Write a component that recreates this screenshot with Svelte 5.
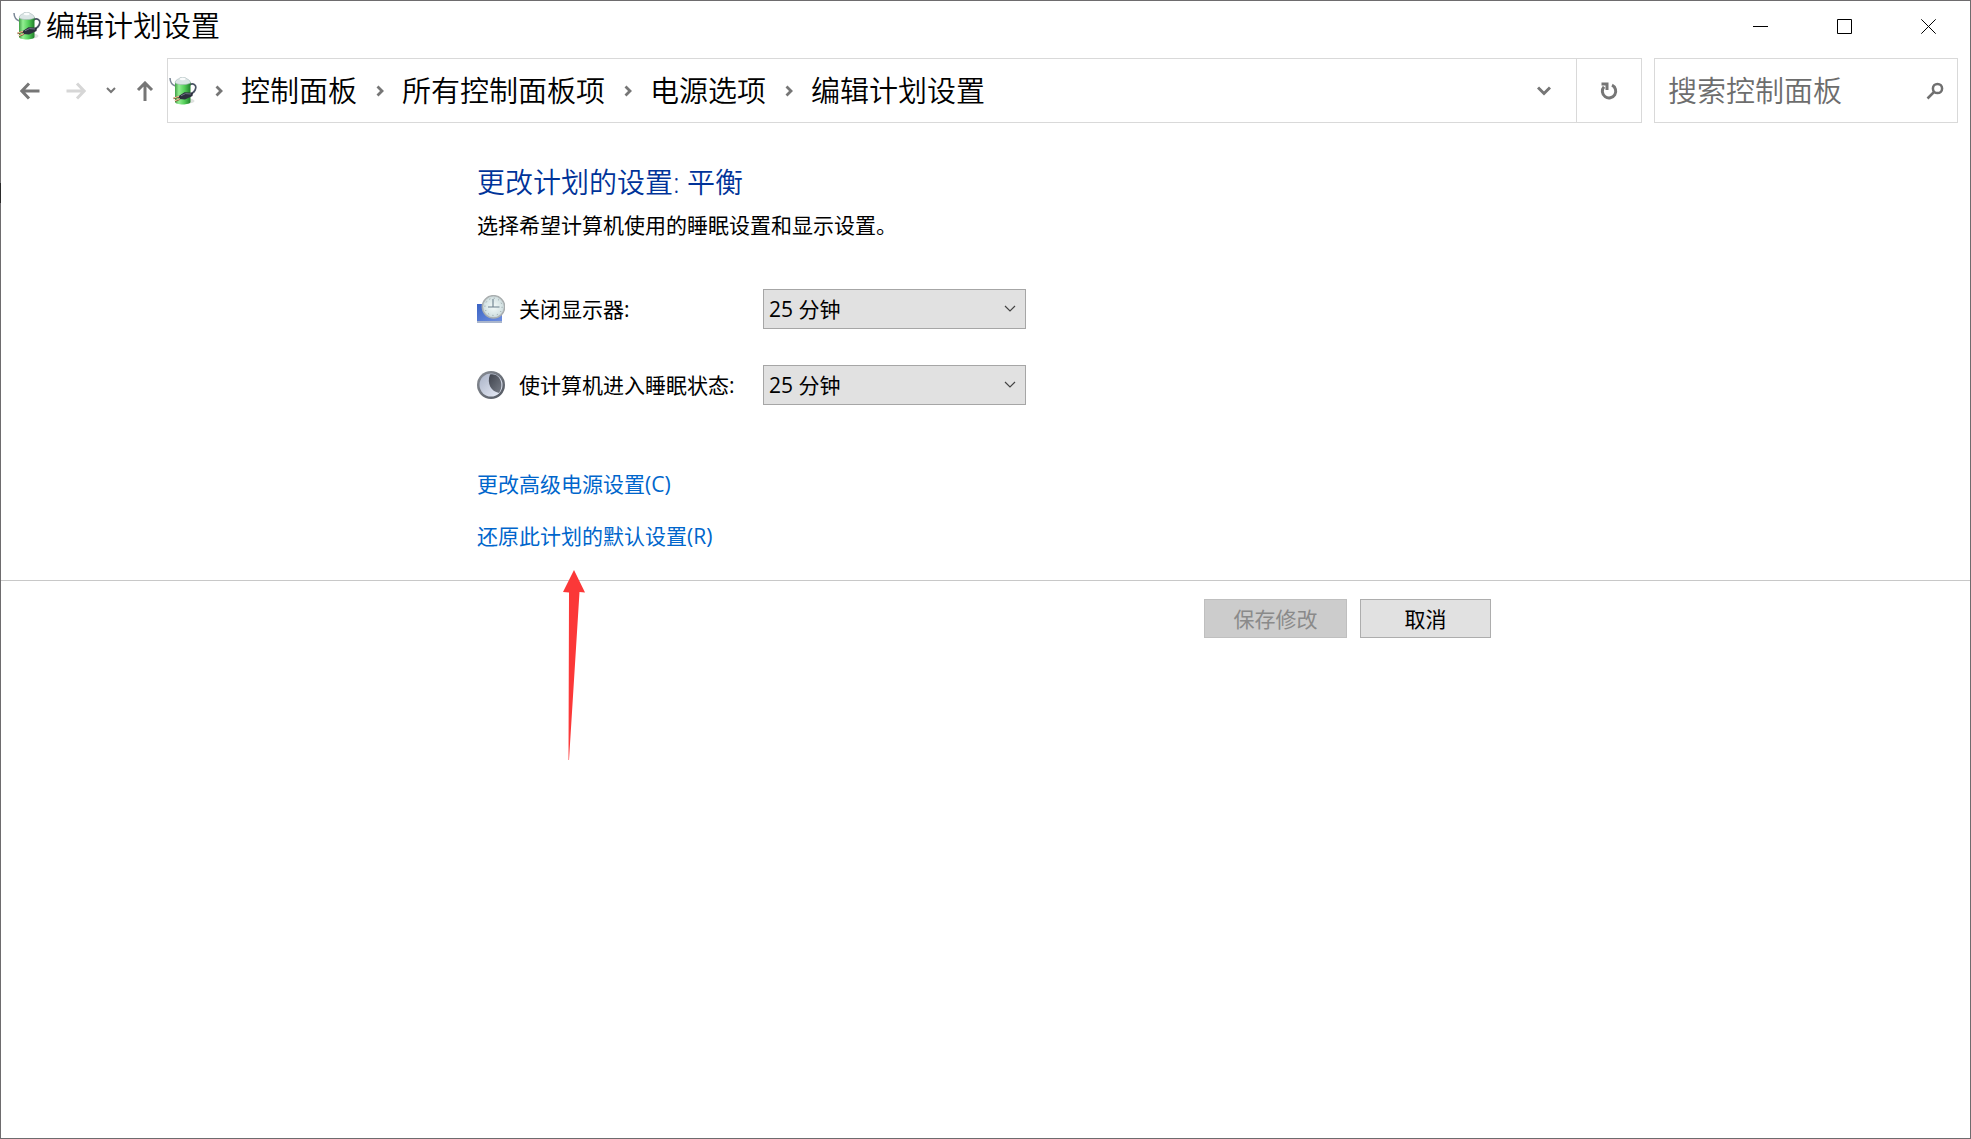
<script>
  const crumbs = ['控制面板', '所有控制面板项', '电源选项', '编辑计划设置'];
  const times = ['25 分钟', '30 分钟', '45 分钟', '1 小时', '从不'];
  const rows = [
    { id: 'display', label: '关闭显示器:' },
    { id: 'sleep', label: '使计算机进入睡眠状态:' }
  ];
  let values = $state({ display: '25 分钟', sleep: '25 分钟' });
</script>

{#snippet battery()}
  <svg class="battery" viewBox="0 0 28 28" aria-hidden="true">
    <defs>
      <linearGradient id="cell" x1="0" x2="1" y1="0" y2="0">
        <stop offset="0" stop-color="#3f9f45" />
        <stop offset="0.25" stop-color="#93ee92" />
        <stop offset="0.6" stop-color="#55d05a" />
        <stop offset="1" stop-color="#1f7f2a" />
      </linearGradient>
    </defs>
    <ellipse cx="19" cy="24" rx="6.500" ry="2.500" fill="#dfe1df" />
    <path d="M1 1C1.200 5.500 3 8 6.500 9" fill="none" stroke="#7b8796" stroke-width="1.500" />
    <path d="M20.500 8C24 5.500 27.600 8 26.600 11.500C26 14.500 24 16 21.500 17" fill="none" stroke="#4a5364" stroke-width="1.700" />
    <path d="M6 5V25C6 28.300 21.500 28.300 21.500 25V5Z" fill="url(#cell)" />
    <path d="M6 5.500C6.500 2.500 10 2 10.500 1.200C11.500 -0.200 16 -0.200 17 1.200C17.500 2 21 2.500 21.500 5.500C20 8.300 7.500 8.300 6 5.500Z" fill="#dbe5e5" stroke="#a3b3b5" stroke-width="0.600" />
    <ellipse cx="13.700" cy="2" rx="3" ry="1.200" fill="#fafcfc" />
    <path d="M9 19.500L15.500 15.200L24 15.800L23.500 19L16 22.500L10 22Z" fill="#2c2f3d" />
    <path d="M12 18.800L16.500 16.600L22 17" fill="none" stroke="#6f7484" stroke-width="1" />
    <path d="M10 19.500L4.500 21.500M11 22L6 24" stroke="#7a4a2c" stroke-width="1.800" />
    <path d="M10 19.200L4.500 21.200M11 21.700L6 23.700" stroke="#f2c9a0" stroke-width="1" />
  </svg>
{/snippet}

{#snippet chevron()}
  <svg class="chevron" viewBox="0 0 8 12" aria-hidden="true">
    <path d="M1.500 1.500L6 6L1.500 10.500" fill="none" stroke="#767676" stroke-width="2.800" />
  </svg>
{/snippet}

<div class="window">
  <header class="titlebar">
    {@render battery()}
    <h1>编辑计划设置</h1>
    <div class="controls">
      <button aria-label="最小化">
        <svg class="glyph" viewBox="0 0 15 15"><path d="M0 7.500H15" /></svg>
      </button>
      <button aria-label="最大化">
        <svg class="glyph" viewBox="0 0 15 15"><path d="M0.500 0.500H14.500V14.500H0.500Z" /></svg>
      </button>
      <button aria-label="关闭">
        <svg class="glyph" viewBox="0 0 15 15"><path d="M0.300 0.300L14.700 14.700M14.700 0.300L0.300 14.700" /></svg>
      </button>
    </div>
  </header>

  <nav class="navbar" aria-label="导航">
    <div class="history">
      <button class="wide" aria-label="后退">
        <svg class="arrow" viewBox="0 0 20 20"><path d="M19.500 10H2M9 2.500L1.800 10L9 17.500" /></svg>
      </button>
      <button class="wide faint" aria-label="前进" disabled>
        <svg class="arrow" viewBox="0 0 20 20"><path d="M0.500 10H18M11 2.500L18.200 10L11 17.500" /></svg>
      </button>
      <button class="narrow" aria-label="最近位置">
        <svg class="small" viewBox="0 0 10 7"><path d="M1 1L5 5L9 1" /></svg>
      </button>
      <button class="up" aria-label="上移">
        <svg class="arrow" viewBox="0 0 20 20"><path d="M10 20V2M3 9L10 2L17 9" /></svg>
      </button>
    </div>

    <div class="address">
      {@render battery()}
      <ol>
        {#each crumbs as crumb}
          <li>
            <span class="sep">{@render chevron()}</span>
            <a href="#top">{crumb}</a>
          </li>
        {/each}
      </ol>
      <button class="drop" aria-label="以前的位置">
        <svg class="down" viewBox="0 0 14 10"><path d="M1 1.500L7 7.500L13 1.500" /></svg>
      </button>
      <button class="refresh" aria-label="刷新">
        <svg class="arrow" viewBox="0 0 20 20">
          <path d="M13 4.200A6.700 6.700 0 1 1 5 5.800" />
          <path d="M2.500 3H8V9" />
        </svg>
      </button>
    </div>

    <div class="search">
      <input type="search" placeholder="搜索控制面板" aria-label="搜索控制面板" />
      <svg class="glass" viewBox="0 0 18 18" aria-hidden="true">
        <circle cx="11.500" cy="6.500" r="4.600" />
        <path d="M8 10L1.500 16.500" />
      </svg>
    </div>
  </nav>

  <main>
    <h2>更改计划的设置: 平衡</h2>
    <p>选择希望计算机使用的睡眠设置和显示设置。</p>

    <div class="settings">
      {#each rows as row}
        <div class="row">
          {#if row.id === 'display'}
            <svg class="icon" viewBox="0 0 28 28" aria-hidden="true">
              <defs>
                <linearGradient id="screen" x1="0" x2="1" y1="0" y2="1">
                  <stop offset="0" stop-color="#3a63c4" />
                  <stop offset="1" stop-color="#6f8fe0" />
                </linearGradient>
                <radialGradient id="dial">
                  <stop offset="0" stop-color="#f4faf9" />
                  <stop offset="0.800" stop-color="#d5e3e4" />
                  <stop offset="1" stop-color="#c3cdcf" />
                </radialGradient>
              </defs>
              <path d="M0 9H25V26H0Z" fill="url(#screen)" />
              <path d="M0 26H25V28H0Z" fill="#aab6cc" />
              <circle cx="16.500" cy="11.800" r="11.200" fill="url(#dial)" stroke="#a9aeaf" stroke-width="1.400" />
              <circle cx="16.500" cy="11.800" r="8.600" fill="none" stroke="#8e9ca0" stroke-width="1" stroke-dasharray="1 3.500" />
              <path d="M16 4V12.500M11 12H22.500" fill="none" stroke="#6b7f8c" stroke-width="1.100" />
            </svg>
          {:else}
            <svg class="icon" viewBox="0 0 28 28" aria-hidden="true">
              <defs>
                <linearGradient id="rim" x1="0" x2="1" y1="0" y2="1">
                  <stop offset="0" stop-color="#8b9097" />
                  <stop offset="1" stop-color="#50555f" />
                </linearGradient>
                <linearGradient id="moon" x1="0" x2="1" y1="0" y2="1">
                  <stop offset="0" stop-color="#a9b2c6" />
                  <stop offset="1" stop-color="#e9edf8" />
                </linearGradient>
                <linearGradient id="shade" x1="0" x2="1" y1="0" y2="1">
                  <stop offset="0" stop-color="#3f434d" />
                  <stop offset="1" stop-color="#777c86" />
                </linearGradient>
              </defs>
              <circle cx="14" cy="14" r="14" fill="url(#rim)" />
              <circle cx="14" cy="14" r="11.500" fill="url(#moon)" />
              <path d="M13 3.500C23 1.500 27.500 14 22 22C14 20.500 9.500 12 13 3.500Z" fill="url(#shade)" />
            </svg>
          {/if}
          <label for={row.id}>{row.label}</label>
          <div class="select">
            <select id={row.id} bind:value={values[row.id]}>
              {#each times as time}
                <option>{time}</option>
              {/each}
            </select>
            <svg class="caret" viewBox="0 0 12 8" aria-hidden="true"><path d="M1 1L6 6L11 1" /></svg>
          </div>
        </div>
      {/each}
    </div>

    <div class="links">
      <a href="#advanced">更改高级电源设置(C)</a>
      <a class="restore" href="#restore">
        还原此计划的默认设置(R)
        <svg class="pointer" viewBox="0 0 22 190" aria-hidden="true">
          <path d="M11 0L22 22.500L16.500 22L6 190H5.500L6 22.500L0 22Z" fill="#fb3838" />
        </svg>
      </a>
    </div>
  </main>

  <footer>
    <div class="actions">
      <button class="save" disabled>保存修改</button>
      <button class="cancel">取消</button>
    </div>
  </footer>
</div>

<style>
  :global(body) {
    background: #fff;
  }

  .window {
    position: relative;
    box-sizing: border-box;
    min-height: 100vh;
    border: 1px solid #6e6c6e;
    background: #fff;
    color: #000;
    font-family: 'Open Sans', 'Noto Sans CJK SC', sans-serif;
    font-size: 21px;
    line-height: 30px;
  }

  .window::before {
    content: '';
    position: absolute;
    left: -1px;
    top: 182px;
    width: 1px;
    height: 20px;
    background: #2a2a2a;
  }

  button,
  input,
  select {
    margin: 0;
    padding: 0;
    border: 0;
    border-radius: 0;
    background: none;
    color: inherit;
    font: inherit;
  }

  svg {
    display: block;
    flex: none;
  }

  .battery {
    width: 28px;
    height: 28px;
  }

  .titlebar {
    display: flex;
    align-items: center;
    height: 50px;
    padding-left: 12px;
  }

  h1 {
    margin: 0 0 0 5px;
    font-size: 29px;
    font-weight: 350;
    line-height: 40px;
  }

  .controls {
    display: flex;
    align-self: stretch;
    margin-left: auto;
  }

  .controls button {
    display: grid;
    place-items: center;
    width: 84px;
  }

  .glyph {
    width: 15px;
    height: 15px;
    fill: none;
    stroke: #000;
    stroke-width: 1;
  }

  .navbar {
    display: flex;
    gap: 12px;
    margin-top: 7px;
    padding-right: 12px;
  }

  .history {
    display: flex;
    align-items: center;
    padding-left: 6px;
  }

  .history button {
    display: grid;
    place-items: center;
    height: 48px;
  }

  .history .wide {
    width: 46px;
  }

  .history .narrow {
    width: 24px;
  }

  .history .up {
    width: 32px;
    margin-left: 6px;
    margin-right: -6px;
  }

  .arrow {
    width: 20px;
    height: 20px;
    fill: none;
    stroke: #767676;
    stroke-width: 3;
  }

  .faint .arrow {
    stroke: #d6d6d6;
  }

  .small,
  .down {
    fill: none;
    stroke: #767676;
    stroke-width: 2;
  }

  .small {
    width: 10px;
    height: 7px;
  }

  .down {
    width: 14px;
    height: 10px;
    stroke-width: 3;
  }

  .address,
  .search {
    display: flex;
    align-items: center;
    box-sizing: border-box;
    height: 65px;
    border: 1px solid #d9d9d9;
  }

  .address {
    flex: 1;
    min-width: 0;
    padding-left: 1px;
  }

  ol {
    display: flex;
    flex: 1;
    margin: 0;
    padding: 0;
    list-style: none;
    font-size: 29px;
    font-weight: 350;
    line-height: 40px;
  }

  li {
    display: flex;
    align-items: center;
  }

  li a {
    color: inherit;
    text-decoration: none;
    white-space: nowrap;
  }

  .sep {
    display: grid;
    place-items: center;
    width: 45px;
  }

  li:first-child .sep {
    width: 44px;
  }

  .chevron {
    width: 8px;
    height: 12px;
  }

  .drop,
  .refresh {
    display: grid;
    place-items: center;
    align-self: stretch;
    width: 64px;
  }

  .refresh {
    width: 65px;
    border-left: 1px solid #d9d9d9;
  }

  .search {
    width: 304px;
    padding: 0 13px;
  }

  .search input {
    flex: 1;
    min-width: 0;
    height: 44px;
    outline: none;
    appearance: none;
    font-size: 29px;
    font-weight: 350;
  }

  .search input::placeholder {
    color: #6d6d6d;
    opacity: 1;
  }

  .glass {
    width: 18px;
    height: 18px;
    fill: none;
    stroke: #707070;
    stroke-width: 2.5;
  }

  main {
    padding: 39px 0 29px 476px;
  }

  h2 {
    margin: 0;
    color: #003399;
    font-size: 28px;
    font-weight: 350;
    line-height: 40px;
  }

  p {
    margin: 8px 0 0;
  }

  .settings {
    display: flex;
    flex-direction: column;
    gap: 36px;
    margin-top: 49px;
  }

  .row {
    display: flex;
    align-items: center;
  }

  .icon {
    width: 28px;
    height: 28px;
  }

  .row label {
    width: 244px;
    margin-left: 14px;
  }

  .select {
    display: grid;
    align-items: center;
    width: 263px;
  }

  .select select {
    grid-area: 1 / 1;
    width: 100%;
    height: 40px;
    padding: 0 5px;
    border: 1px solid #a6a6a6;
    background: #e1e1e1;
    appearance: none;
  }

  .caret {
    grid-area: 1 / 1;
    justify-self: end;
    width: 12px;
    height: 8px;
    margin-right: 10px;
    fill: none;
    stroke: #444;
    stroke-width: 1.2;
    pointer-events: none;
  }

  .links {
    display: flex;
    flex-direction: column;
    align-items: flex-start;
    gap: 22px;
    margin-top: 64px;
  }

  .links a {
    color: #0066cc;
    text-decoration: none;
  }

  .restore {
    position: relative;
  }

  .pointer {
    position: absolute;
    left: 86px;
    top: 49px;
    width: 22px;
    height: 190px;
    pointer-events: none;
  }

  footer {
    padding: 18px 0 18px 477px;
    border-top: 1px solid #c8c8c8;
  }

  .actions {
    display: flex;
    justify-content: flex-end;
    gap: 13px;
    max-width: 1013px;
  }

  .actions button {
    height: 39px;
    border: 1px solid #adadad;
    background: #e1e1e1;
  }

  .actions .save {
    width: 143px;
    border-color: #bfbfbf;
    background: #ccc;
    color: #8a8a8a;
  }

  .actions .cancel {
    width: 131px;
  }
</style>
